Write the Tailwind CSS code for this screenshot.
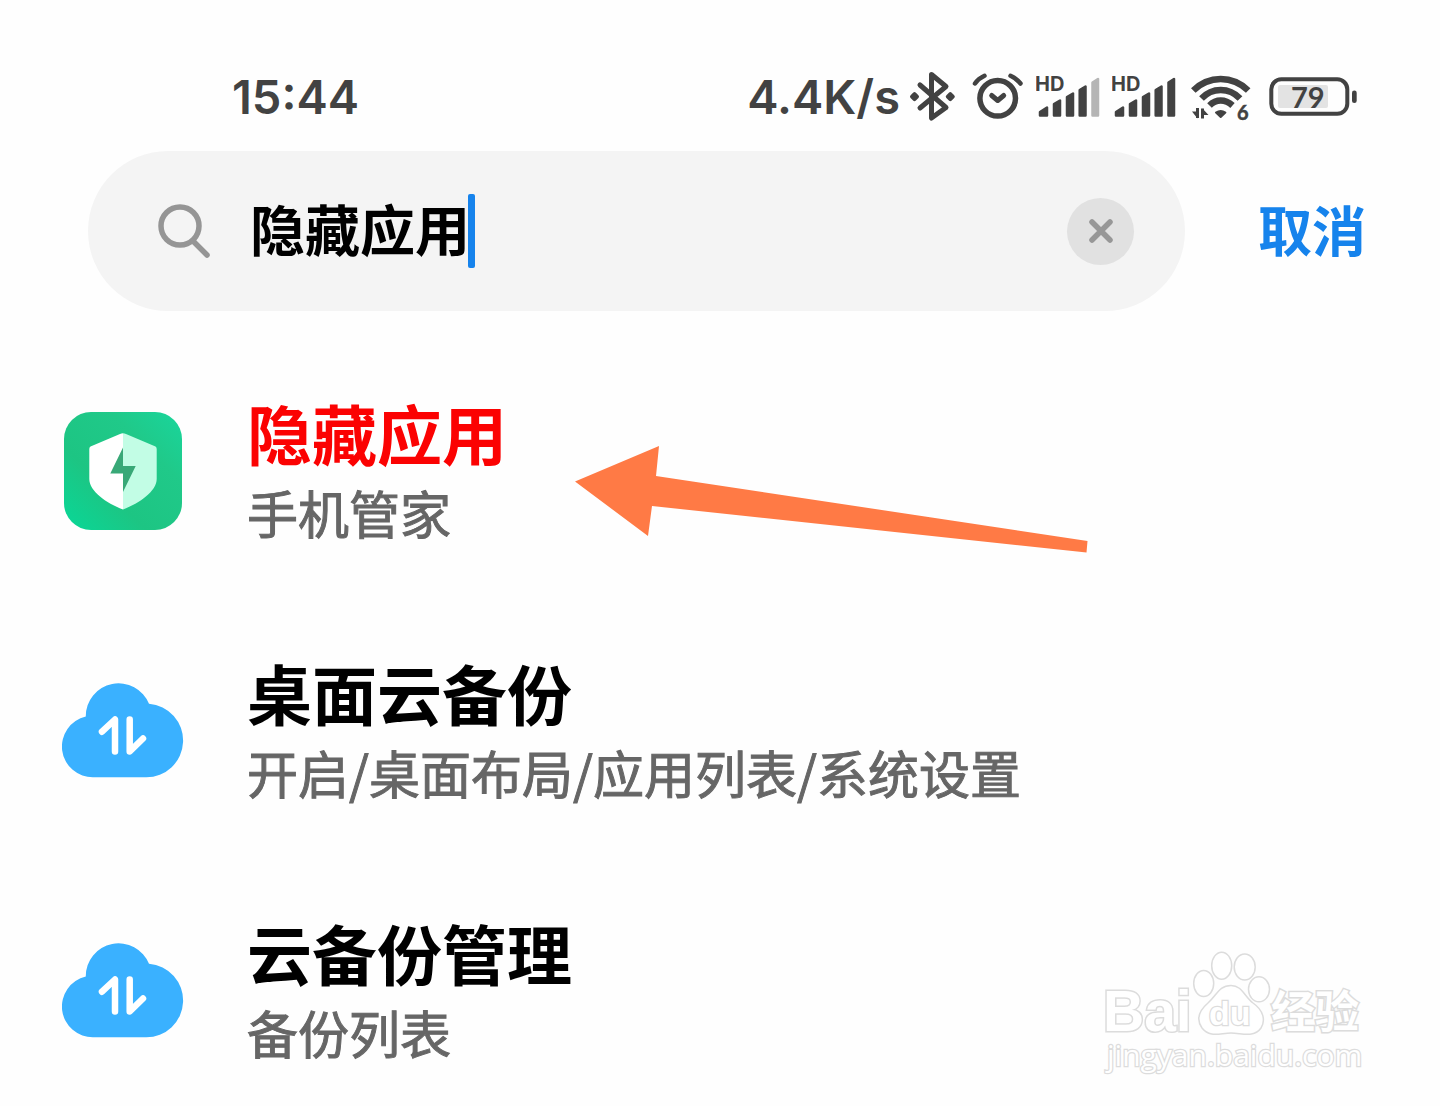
<!DOCTYPE html>
<html lang="zh-CN">
<head>
<meta charset="utf-8">
<meta name="viewport" content="width=device-width, initial-scale=1">
<title>设置搜索</title>
<script src="https://cdn.jsdelivr.net/npm/@tailwindcss/browser@4"></script>
</head>
<body class="relative min-h-screen overflow-x-hidden bg-[#fefefe] font-['Inter','Noto_Sans_CJK_SC',sans-serif] text-black">

<!-- Status bar -->
<header class="flex h-[124px] items-end justify-between pr-[82px] pl-[232px] text-[#424242]">
  <time class="text-[47px] leading-[54px] font-semibold">15:44</time>
  <div class="flex items-center gap-3">
    <span class="-mr-1 text-[47px] leading-[54px] font-semibold">4.4K/s</span>
    <svg class="h-[54px] w-[52px]" viewBox="0 0 52 54" fill="none" stroke="currentColor" stroke-width="5" stroke-linecap="round" stroke-linejoin="round" role="img" aria-label="蓝牙">
      <path d="M12 15 38 37.500 23.500 48V4.500L38 16.500 12 38"/>
      <path d="M6.500 24.200 9 26.700 6.500 29.200 4 26.700ZM42.300 24.200 44.800 26.700 42.300 29.200 39.800 26.700Z" fill="currentColor" stroke-width="4"/>
    </svg>
    <svg class="h-[54px] w-[52px]" viewBox="0 0 52 54" fill="none" stroke="currentColor" stroke-width="5" stroke-linecap="round" stroke-linejoin="round" role="img" aria-label="闹钟">
      <circle cx="25.700" cy="28.300" r="17.800" stroke-width="5.500"/>
      <path d="M19.700 25.500 25.700 30.500 31.700 25.500"/>
      <path d="M3 13.500Q6.500 8.500 12.500 5.800M38.500 5.800Q44.500 8.500 48.500 13.500" stroke-width="4.500"/>
    </svg>
    <svg class="h-[54px] w-[64px]" viewBox="0 0 64 54" fill="currentColor" stroke="currentColor" stroke-linejoin="round" stroke-width="2.500" role="img" aria-label="信号一">
      <path d="M4 42 11 37.500V45.500H4ZM18 34 24 30.500V45.500H18ZM31 27 37 23.500V45.500H31ZM43.700 20 49.500 16.500V45.500H43.700Z"/>
      <path d="M56.500 12.500 62 9V45.500H56.500Z" class="fill-[#b5b5b5] stroke-[#b5b5b5]"/>
      <text x="-1" y="21" font-size="20" font-weight="700" stroke="none">HD</text>
    </svg>
    <svg class="h-[54px] w-[64px]" viewBox="0 0 64 54" fill="currentColor" stroke="currentColor" stroke-linejoin="round" stroke-width="2.500" role="img" aria-label="信号二">
      <path d="M4 42 11 37.500V45.500H4ZM18 34 24 30.500V45.500H18ZM31 27 37 23.500V45.500H31ZM43.700 20 49.500 16.500V45.500H43.700ZM56.500 12.500 62 9V45.500H56.500Z"/>
      <text x="-1" y="21" font-size="20" font-weight="700" stroke="none">HD</text>
    </svg>
    <svg class="h-[54px] w-[68px]" viewBox="0 0 68 54" fill="none" stroke="currentColor" role="img" aria-label="无线网络">
      <path d="M5.300 20.500Q17 9 32.700 9T60.200 20.500M13.500 28.500Q21.500 20 32.700 20T52 28.500M21.500 35.500Q26.500 30.500 32.700 30.500T44.500 35.500" stroke-width="6.500"/>
      <path d="M28 42.500Q32.700 39.500 37.400 42.500L32.700 47Z" fill="currentColor" stroke-width="2" stroke-linejoin="round"/>
      <path d="M9.500 38V48M14.500 48.500V38.500" stroke-width="3"/>
      <path d="M4 41.500H9.500V48.500ZM14.500 38.500 20.500 45H14.500Z" fill="currentColor" stroke="none"/>
      <text x="49" y="50" font-size="20" font-weight="700" font-family="Lato, sans-serif" fill="currentColor" stroke-width=".5">6</text>
    </svg>
    <svg class="h-[54px] w-[90px]" viewBox="0 0 90 54" fill="none" role="img" aria-label="电量">
      <rect x="3.300" y="9.300" width="76" height="34.500" rx="10" stroke="currentColor" stroke-width="4"/>
      <rect x="84" y="20.500" width="4.700" height="12.500" rx="2.300" fill="currentColor"/>
      <rect x="10" y="15" width="50" height="23" rx="2" class="fill-[#e3e3e3]"/>
      <text x="23" y="38" font-size="29" font-weight="700" font-family="Lato, sans-serif" fill="currentColor">79</text>
    </svg>
  </div>
</header>

<!-- Search -->
<form class="mt-[27px] flex items-center gap-[73px] pr-[74px] pl-[88px]">
  <div class="flex h-40 min-w-0 flex-1 items-center rounded-full bg-[#f4f4f4] pr-[51px] pl-[68px]">
    <label for="q" class="mr-10" aria-label="搜索">
      <svg class="size-[54px]" viewBox="0 0 54 54" fill="none" stroke="#959595" stroke-linecap="round">
        <circle cx="24" cy="22" r="19" stroke-width="5.500"/>
        <path d="M37.500 37.500 51 51" stroke-width="5.500"/>
      </svg>
    </label>
    <input id="q" type="text" value="隐藏应用" class="field-sizing-content h-20 bg-transparent text-[55px] leading-[80px] font-bold outline-none">
    <span class="-ml-0.5 h-[74px] w-[7px] rounded-xs bg-[#1683ec]"></span>
    <button type="button" aria-label="清除" class="ml-auto flex size-[67px] items-center justify-center rounded-full bg-[#e1e1e1]">
      <svg class="size-6" viewBox="0 0 24 24" stroke="#979797" stroke-width="5.500" stroke-linecap="round"><path d="M3 3 21 21M21 3 3 21"/></svg>
    </button>
  </div>
  <button type="button" class="pt-1 text-[54px] leading-[80px] font-bold text-[#1683ec]">取消</button>
</form>

<!-- Results -->
<ul class="mt-[83px] flex flex-col gap-[106px]">
  <li class="relative">
    <a href="#hidden-apps" class="flex items-center gap-[63px] px-[62px]">
      <svg class="size-[122px] shrink-0" viewBox="0 0 122 122" aria-hidden="true">
        <defs>
          <linearGradient id="tile" x1="0" y1="1" x2="1" y2="0">
            <stop offset="0" stop-color="#08d898"/><stop offset=".35" stop-color="#1dc583"/><stop offset=".7" stop-color="#20c989"/><stop offset="1" stop-color="#19d69c"/>
          </linearGradient>
        </defs>
        <rect x="2" y="2" width="118" height="118" rx="27" fill="url(#tile)"/>
        <path d="M61 23.300Q59.500 23.300 58 24L28.500 36.500Q27.300 37 27.300 39V69C27.300 81 44 93 61 99.500Z" fill="#fff"/>
        <path d="M61 23.300Q62.500 23.300 64 24L93.500 36.500Q94.700 37 94.700 39V69C94.700 81 78 93 61 99.500Z" fill="#c2fde5"/>
        <path d="M61 37.500 48.300 63.500H61V82L73.700 56H61Z" fill="#38a877"/>
      </svg>
      <div class="flex flex-col pb-0.5">
        <h2 class="text-[65px] leading-[86px] font-bold text-[#fb0202]">隐藏应用</h2>
        <p class="-mt-0.5 font-['Noto_Sans_CJK_SC',sans-serif] text-[51px] leading-[68px] text-[#666] [-webkit-text-stroke:1px_#666]">手机管家</p>
      </div>
    </a>
    <svg class="pointer-events-none absolute top-[52px] left-[575px] h-[107px] w-[513px]" viewBox="0 0 513 107" aria-hidden="true">
      <path d="M0 35.500 84 0 81 30 512.500 95 511.500 106.500 77 60 73 90Z" fill="#ff7a45"/>
    </svg>
  </li>
  <li>
    <a href="#desktop-backup" class="flex items-center gap-[63px] px-[62px]">
      <svg class="size-[122px] shrink-0" viewBox="0 0 122 122" aria-hidden="true">
        <g id="cloud">
          <path d="M31.500 107.300A30.800 30.800 0 0 1 23.800 46.500 32.800 32.800 0 0 1 87 33.800 36.800 36.800 0 0 1 84 107.300Z" fill="#3ab1ff"/>
          <path d="M40 61.700 53 49.500V81.500M67.700 49.500V81.500L81 68.500" fill="none" stroke="#fff" stroke-width="6.500" stroke-linecap="round" stroke-linejoin="round"/>
        </g>
      </svg>
      <div class="flex flex-col pb-0.5">
        <h2 class="text-[65px] leading-[86px] font-bold">桌面云备份</h2>
        <p class="-mt-0.5 font-['Noto_Sans_CJK_SC',sans-serif] text-[51px] leading-[68px] text-[#666] [-webkit-text-stroke:1px_#666]">开启/桌面布局/应用列表/系统设置</p>
      </div>
    </a>
  </li>
  <li>
    <a href="#backup-manage" class="flex items-center gap-[63px] px-[62px]">
      <svg class="size-[122px] shrink-0" viewBox="0 0 122 122" aria-hidden="true"><use href="#cloud"/></svg>
      <div class="flex flex-col pb-0.5">
        <h2 class="text-[65px] leading-[86px] font-bold">云备份管理</h2>
        <p class="-mt-0.5 font-['Noto_Sans_CJK_SC',sans-serif] text-[51px] leading-[68px] text-[#666] [-webkit-text-stroke:1px_#666]">备份列表</p>
      </div>
    </a>
  </li>
</ul>

<!-- Watermark -->
<svg class="pointer-events-none absolute right-[70px] bottom-[28px] h-[130px] w-[270px]" viewBox="0 0 270 130" fill="#fff" stroke="#dcdcdc" stroke-width="1.500" role="img" aria-label="百度经验">
  <g stroke-width="3" paint-order="stroke" font-weight="700">
    <text x="3" y="83" font-size="57" font-family="Liberation Sans, sans-serif">Bai</text>
    <text x="171" y="80" font-size="44" font-family="Noto Sans CJK SC, sans-serif">经验</text>
  </g>
  <ellipse cx="103.700" cy="35.500" rx="10" ry="13"/>
  <ellipse cx="121.700" cy="17.700" rx="10" ry="13.500"/>
  <ellipse cx="144.700" cy="19" rx="10.500" ry="13"/>
  <ellipse cx="159" cy="41.300" rx="10.500" ry="12.500"/>
  <path d="M131 37.500C142 37.500 144 48 153 55 163 62 166 72 161 80 154 90 142 85 131 85S110 90 102 80C95 70 101 61 108 55 117 47 119 37.500 131 37.500Z"/>
  <text x="109" y="77" font-size="34" font-weight="700" stroke-width="2.500" paint-order="stroke" font-family="Liberation Sans, sans-serif">du</text>
  <text x="7" y="118" font-size="30" stroke-width="2.500" paint-order="stroke" font-family="Open Sans, sans-serif">jingyan.baidu.com</text>
</svg>
</body>
</html>
